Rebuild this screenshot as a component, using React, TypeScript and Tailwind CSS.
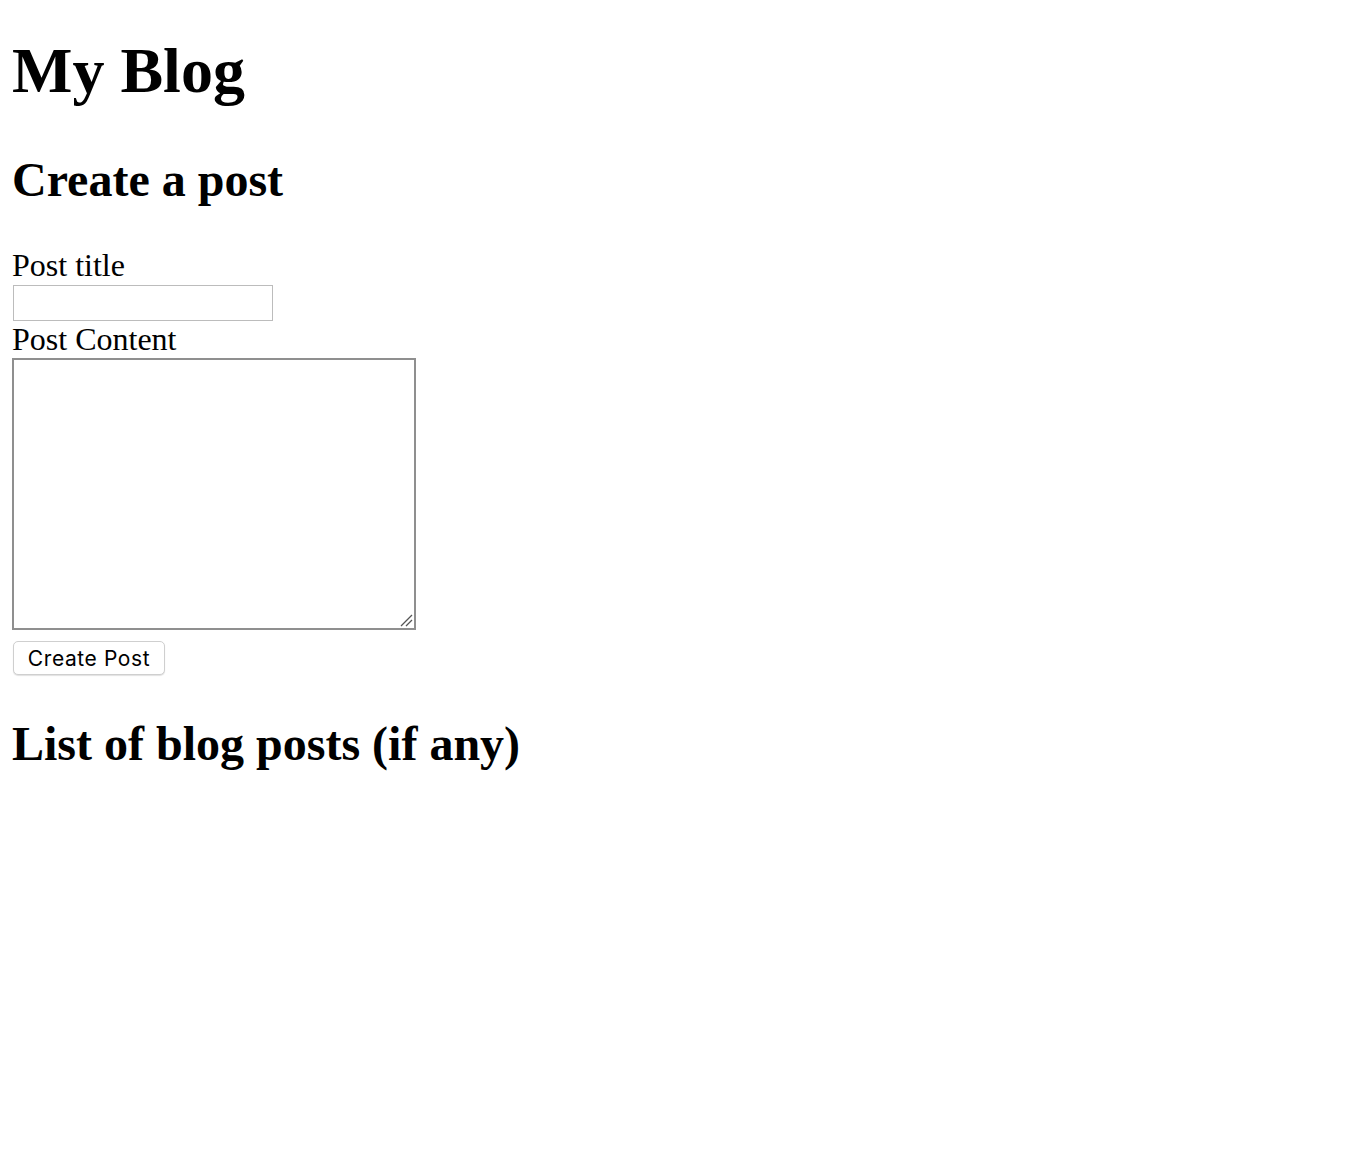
export default function App() {
  return (
    <div className="min-h-screen bg-white px-[12px] pt-[34px] text-black [font-family:'Liberation_Serif','Times_New_Roman',serif]">
      <h1 className="mb-[44px] text-[64px] font-bold leading-[74px]">My Blog</h1>

      <h2 className="mb-[40px] text-[48px] font-bold leading-[55px]">Create a post</h2>

      <form onSubmit={(e) => e.preventDefault()}>
        <label htmlFor="title" className="block text-[32px] leading-[37px]">
          Post title
        </label>
        <input
          id="title"
          type="text"
          className="ml-[1px] mt-[1px] block h-[36px] w-[260px] border border-[#bcbcbc] bg-white px-1 outline-none"
        />

        <label htmlFor="content" className="block text-[32px] leading-[37px]">
          Post Content
        </label>
        <div className="relative w-[404px]">
          <textarea
            id="content"
            className="block h-[272px] w-[404px] resize-none border-2 border-[#8f8f8f] bg-white outline-none"
          />
          {/* resize grip */}
          <svg
            className="pointer-events-none absolute bottom-[3px] right-[3px]"
            width="14"
            height="14"
            viewBox="0 0 14 14"
          >
            <path d="M2 13 L13 2 M7 13 L13 7" stroke="#555" strokeWidth="1.3" />
          </svg>
        </div>

        <button
          type="submit"
          className="ml-[1px] mt-[11px] flex h-[34px] w-[152px] items-center justify-center rounded-[5px] border border-[#cfcfcf] bg-white text-[21px] leading-none tracking-[0.6px] text-black shadow-[0_1px_1px_rgba(0,0,0,0.12)] [font-family:Inter,'Liberation_Sans',sans-serif]"
        >
          Create Post
        </button>
      </form>

      <h2 className="mt-[41px] text-[48px] font-bold leading-[55px]">List of blog posts (if any)</h2>
    </div>
  );
}
